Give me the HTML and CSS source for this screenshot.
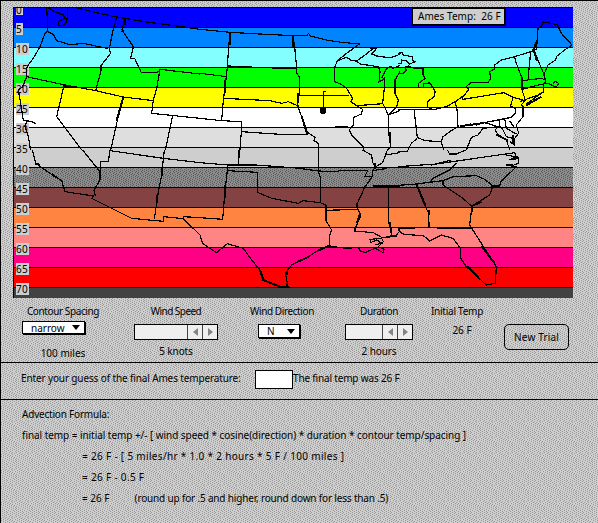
FILE: index.html
```
<!DOCTYPE html>
<html lang="en">
<head>
<meta charset="utf-8">
<title>Advection</title>
<link rel="stylesheet" href="styles.css">
</head>
<body>
<svg class="texture" width="598" height="523" aria-hidden="true">
  <defs>
    <path id="grain" d="M0 .5h1m3 0h1m2 0h1m4 0h1M2 1.5h1m3 0h1m3 0h1m3 0h1M0 2.5h1m3 0h1m3 0h1m3 0h1M2 3.5h1m3 0h1m3 0h1m4 0h1M0 4.5h1m3 0h1m4 0h1m2 0h1M3 5.5h1m2 0h1m4 0h1m2 0h1M1 6.5h1m3 0h1m2 0h1m3 0h1M3 7.5h1m3 0h1m2 0h1m4 0h1M1 8.5h1m3 0h1m3 0h1m2 0h1M3 9.5h1m3 0h1m3 0h1m2 0h1M0 10.5h1m4 0h1m3 0h1m3 0h1M2 11.5h1m4 0h1m3 0h1m3 0h1M0 12.5h1m3 0h1m4 0h1m3 0h1M2 13.5h1m3 0h1m4 0h1m3 0h1M0 14.5h1m3 0h1m3 0h1m4 0h1M2 15.5h1m3 0h1m3 0h1m3 0h1"/>
    <pattern id="light" width="16" height="16" patternUnits="userSpaceOnUse"><rect width="16" height="16" fill="#cecece"/><use href="#grain" stroke="#999"/></pattern>
    <pattern id="dark" width="16" height="16" patternUnits="userSpaceOnUse"><rect width="16" height="16" fill="#8c8c8c"/><use href="#grain" stroke="#5a5a5a"/></pattern>
  </defs>
  <rect width="598" height="523" fill="url(#light)"/>
</svg>
<main class="window">
  <section class="map">
    <div class="band blue"><span class="tick first">0</span></div>
    <div class="band azure"><span class="tick one">5</span></div>
    <div class="band cyan"><span class="tick">10</span></div>
    <div class="band green"><span class="tick">15</span></div>
    <div class="band yellow"><span class="tick">20</span></div>
    <div class="band white"><span class="tick">25</span></div>
    <div class="band pale"><span class="tick">30</span></div>
    <div class="band silver"><span class="tick">35</span></div>
    <div class="band gray"><svg width="560" height="19"><rect width="560" height="19" fill="url(#dark)"/></svg><span class="tick">40</span></div>
    <div class="band brown"><span class="tick">45</span></div>
    <div class="band orange"><span class="tick">50</span></div>
    <div class="band salmon"><span class="tick">55</span></div>
    <div class="band pink"><span class="tick">60</span></div>
    <div class="band red"><span class="tick">65</span></div>
    <div class="band char"><span class="tick">70</span></div>
    <svg class="states" width="560" height="291" viewBox="13 7 560 291">
      <g transform="scale(.33333)">
        <path d="M140 20L142 60 143 92 135 100 120 140 103 170 85 195 80 205V230L68 260 55 270 62 310 70 362 95 364 108 372M80 365L75 380 85 410 92 450M142 22L165 35 190 45 195 55 175 65V76H190L200 65 203 40V20H215L280 36 345 50 440 66 545 80 600 88M143 95L160 103 170 122 210 134 250 130 325 146M350 52L338 95 328 146 332 160 303 197V212L287 272M374 55L366 90 400 140 392 175H404L424 218H460L478 215M600 222L480 208 470 265 460 300 455 340 600 355M80 230L190 254 287 272 370 291 460 302M192 256L170 350 245 450M370 291L350 370 332 450M518 347L496 450"/>
        <path class="heavy" d="M190 256L230 263M370 291L350 362M374 57V75M370 90L366 96"/>
      </g>
      <g transform="translate(200 0) scale(.33333)">
        <path d="M0 88L90 97 180 102 278 107H322L325 100 332 108 378 120 425 127 478 132 440 160 412 182 403 205V245L422 252 440 265 458 295 452 305 470 317 488 328 484 342 462 352 460 375 448 390 455 405 490 440V450M90 97L86 140 82 200 75 265 70 300 65 360M0 220L80 230M82 198L155 200M217 205H290M278 107L284 140 290 205 290 220 298 230V280L292 315 305 350 320 395 345 412 342 422 355 430V450M72 295L210 302 245 310 265 305 295 318M298 287H448M0 355L65 362 125 365 124 395 240 403H325M124 395L120 450M405 380H445M470 317L550 311M412 182L440 172 455 182 470 183 495 165 520 145 510 145H530L515 162 530 168 560 172 575 172 600 163M470 183L480 192 535 200 540 215 537 245 548 240 553 235V265L548 310 558 330 565 345V390L572 440 563 450M545 235L560 205 572 200 580 205 600 196M600 215L585 240V280L595 300 590 320 565 345 600 332M370 325V275H378"/>
        <path class="heavy" d="M90 97V135M75 240V280M278 108V140M294 280V310M570 395V423M585 238V280M305 350L322 402"/>
        <circle cx="369" cy="332" r="10"/>
      </g>
      <g transform="translate(398 0) scale(.33333)">
        <path d="M0 160L12 158 15 165 43 170 45 182 52 185 35 192 25 182 10 180 10 190H0M0 222L15 220 25 210 20 202 32 198 40 203 75 207 75 225 82 235 62 250V262M75 265L78 252 95 248 112 275 108 290 88 305V320L105 330 145 320 175 303 200 285 212 268 205 260 218 248 270 248 278 235 275 215 290 207V195L310 180 350 170 408 152 415 148 418 120 420 85 430 80 435 66 460 70 478 75 490 100 522 135 500 150 475 170 473 180 450 195 437 225 443 240 440 250 455 252 475 262 482 250 472 244 465 250M0 330L45 328 105 328M48 328L58 412 80 422 130 425 135 410 155 395 180 380 178 335 172 305M190 288L195 298 318 278 345 292 375 300M345 292L338 318 352 325V340L340 352 275 365 187 378M350 170L355 190 372 235V270L382 300 370 315 375 320V350L355 375M398 155L390 240M408 152L440 228M372 242L430 235 443 240M372 268L422 255 437 252V275L385 312M365 305L420 285 437 275M217 372L235 375 260 368 300 380 292 390 300 405 325 420 335 450M355 375L362 400 350 415V435L335 425M305 360V378L315 390 325 410 345 415M320 355L325 385 355 402M335 362L350 385M300 380L255 385 240 405 220 412 205 450M30 450L40 430 58 415M130 425L137 450"/>
        <path class="heavy" d="M372 230V265M408 152L416 182M295 403L330 422M346 405V430M405 152L418 120M385 316L430 290M187 378L225 374"/>
      </g>
      <g transform="translate(0 150) scale(.33333)">
        <path d="M97 0L107 40 150 70 185 92 195 125 280 138 275 145 395 205 490 214 492 200 550 206V200L600 203M550 206L600 255M248 0L300 65 302 35H325L330 0M300 65V90L282 120 286 138M330 2L490 25 600 38M493 0L485 75 475 125 463 208"/>
        <path class="heavy" d="M486 50V78M471 135V160M105 40L120 45M155 72L168 82"/>
      </g>
      <g transform="translate(200 150) scale(.33333)">
        <path d="M0 38L83 45H166L290 54 355 63 410 65 420 62H503L495 78 517 80 518 62 528 50M83 45L82 62 172 67V127L215 145 295 160 310 152 360 158 378 165V212L395 240 388 260 390 290M82 62L75 120 68 208 0 203M117 0L115 45M355 0V63L362 85V160M378 181L475 178M517 80L495 110 470 165 482 200 465 235V243L520 248 545 262 585 260 600 242M520 108H600M566 110V215L575 255M518 62L562 55M487 0L515 15 518 38 528 50 548 38 562 0M555 15L600 8M0 255L8 280 50 308 82 281 130 295 155 330 180 360 190 390 235 410H264L256 370 275 345 325 320 360 298 385 288 440 295 475 292 480 302 495 308 525 295 550 308 552 297 535 290 550 275 545 265 510 268 512 278 530 270 545 280 525 285"/>
        <path class="heavy" d="M117 0V25M74 105V145M472 160V170M480 190L470 220M570 215L573 250M180 360L190 390 240 410M260 362V375M262 400V410M295 335L330 318M355 302L385 288M570 258H590M526 40V58"/>
      </g>
      <g transform="translate(398 150) scale(.33333)">
        <path d="M0 50L115 42 350 8 355 20 335 30 362 25V40L340 48 355 50 345 60 308 95 305 108H285L275 135 222 168 215 225 295 350 292 400 265 405 205 350 188 325V295L165 265 130 255 95 273 78 258 15 252 0 240M0 106L55 102 135 92 165 80 235 77 260 88 285 108M135 92V105L145 112 195 145 220 168M55 102L75 155 92 190V230M0 237L52 235M118 235H220M98 95L105 85 155 60 175 40M148 0L155 12H175L203 0M0 5H28V0M100 45L160 30M325 15L362 22M325 45H345"/>
        <path class="heavy" d="M55 102L82 165M92 180V194M92 215V230M250 288L290 340M208 350L240 382M222 168V185M280 108H290M222 168L250 155"/>
      </g>
    </svg>
    <div class="readout">Ames Temp:&nbsp; 26 F</div>
  </section>
  <section class="controls">
    <div class="control contour"><span class="t-contour">Contour Spacing</span><div class="select"><span class="t-narrow">narrow</span><i class="down"></i></div><span class="t-miles">100 miles</span></div>
    <div class="control speed"><span class="t-speed">Wind Speed</span><div class="slider"><b><i class="left"></i></b><b><i class="right"></i></b></div><span class="t-knots">5 knots</span></div>
    <div class="control direction"><span class="t-direction">Wind Direction</span><div class="select"><span>N</span><i class="down"></i></div></div>
    <div class="control duration"><span class="t-duration">Duration</span><div class="slider"><b><i class="left"></i></b><b><i class="right"></i></b></div><span class="t-hours">2 hours</span></div>
    <div class="control initial"><span class="t-initial">Initial Temp</span><span class="t-value">26 F</span></div>
    <button class="trial">New Trial</button>
  </section>
  <section class="guess"><label for="guess" class="t-enter">Enter your guess of the final Ames temperature:</label><input id="guess"><span class="t-final">The final temp was 26 F</span></section>
  <section class="formula">
    <p class="t-heading">Advection Formula:</p>
    <p class="t-eq">final temp = initial temp +/- [ wind speed * cosine(direction) * duration * contour temp/spacing ]</p>
    <p class="step t-step1">= 26 F - [ 5 miles/hr * 1.0 * 2 hours * 5 F / 100 miles ]</p>
    <p class="step t-step2">= 26 F - 0.5 F</p>
    <p class="step t-step3"><span>= 26 F</span><span class="note">(round up for .5 and higher, round down for less than .5)</span></p>
  </section>
</main>
</body>
</html>
```
FILE: styles.css
```
* { box-sizing: border-box; }
body { margin: 0; overflow: hidden; font: 10px/12px "Noto Sans", "Open Sans", sans-serif; color: #000; white-space: nowrap; }
.texture { position: absolute; inset: 0; z-index: -1; shape-rendering: crispEdges; }
.window { width: 598px; height: 523px; border-left: 1px solid #000; border-top: 1px solid #000; padding-top: 6px; }
.map { position: relative; width: 560px; height: 291px; margin-left: 12px; overflow: hidden; border-left: 1px solid #000; }
.band { position: relative; height: 20px; border-top: 1px solid #000; }
.band svg { position: absolute; left: 0; top: 0; shape-rendering: crispEdges; }
.blue { background: #00f; } .azure { background: #0084ff; } .cyan { background: #84ffff; }
.green { background: #0f0; } .yellow { background: #ff0; } .white { background: #fff; }
.pale { background: #dedede; } .silver { background: #cecece; } .gray { background: #8c8c8c; }
.brown { background: #844242; } .orange { background: #ff8442; } .salmon { background: #ff8484; }
.pink { background: #ff0084; } .red { background: #f00; } .char { background: #424242; height: 11px; }
.tick { position: absolute; left: 2px; top: -5px; width: 13px; height: 12px; z-index: 1; background: #cecece; line-height: 12px; letter-spacing: .4px; }
.tick.first { width: 7px; top: 0; height: 7px; line-height: 4px; }
.tick.one { width: 7px; }
.states { position: absolute; left: -1px; top: 0; z-index: 2; shape-rendering: crispEdges; }
.states path { fill: none; stroke: #000; stroke-width: 3.6; }
.states .heavy { stroke-width: 6; }
.readout { position: absolute; z-index: 3; left: 398px; top: 1px; width: 94px; height: 18px; border: 1px solid #000; border-width: 1px 2px 2px 1px; background: #cecece; padding-left: 5px; line-height: 14px; letter-spacing: .05px; }
.controls { display: grid; grid-template-columns: 100px 126px 86px 108px 48px 1fr; height: 64px; padding-left: 12px; align-items: start; }
.control { display: flex; flex-direction: column; align-items: center; padding-top: 7px; }
.select { display: flex; align-items: center; justify-content: space-between; background: #fff; border: 1px solid #000; box-shadow: 1px 1px #000; height: 14px; padding: 0 4px 0 8px; }
.contour .select { width: 63px; margin: 4px 18px 13px 9px; align-self: start; height: 13px; }
.direction .select { width: 42px; margin-top: 7px; margin-right: 6px; height: 14px; }
.down { border: 4.5px solid transparent; border-top: 5px solid #000; border-bottom: 0; }
.slider { display: flex; justify-content: flex-end; height: 16px; border: 1px solid #000; background: #efefef; margin: 7px 0 5px; }
.speed .slider { width: 84px; }
.duration .slider { width: 68px; }
.slider b { display: flex; align-items: center; justify-content: center; width: 15px; border-left: 1px solid #444; }
.left, .right { border: 4px solid transparent; }
.left { border-right: 5px solid #848484; border-left: 0; }
.right { border-left: 5px solid #848484; border-right: 0; }
.t-contour { letter-spacing: -.4px; }
.t-speed { letter-spacing: -.55px; }
.t-direction { letter-spacing: -.4px; }
.t-duration { letter-spacing: -.45px; }
.t-knots, .t-hours { letter-spacing: -.1px; }
.t-initial { letter-spacing: -.25px; }
.t-value { margin: 7px 0 0 10px; }
.trial { width: 65px; height: 26px; margin: 26px 0 0 23px; padding: 0; border: 1px solid #000; border-radius: 5px; background: none; font: inherit; letter-spacing: .15px; color: #000; }
.guess { display: flex; align-items: center; height: 37px; border-top: 1px solid #000; padding: 0 0 6px 20px; }
.guess label { width: 234px; letter-spacing: -.13px; }
.guess input { width: 38px; height: 19px; margin-top: 3px; border: 1px solid #000; border-radius: 0; background: #fff; padding: 0; }
.t-final { letter-spacing: -.17px; }
.formula { border-top: 1px solid #000; padding: 8px 0 0 21px; }
.formula p { margin: 0 0 9px; }
.formula .step { padding-left: 60px; }
.t-heading { letter-spacing: -.2px; }
.t-eq { letter-spacing: -.055px; }
.t-step1, .t-step2 { letter-spacing: .32px; }
.note { margin-left: 25px; letter-spacing: -.17px; }
```
